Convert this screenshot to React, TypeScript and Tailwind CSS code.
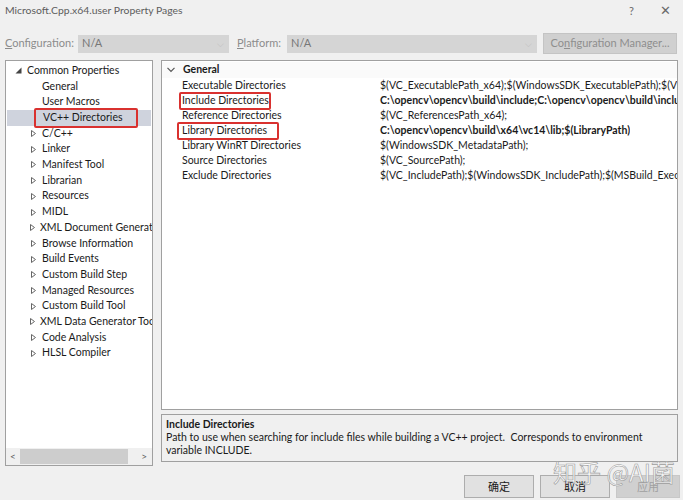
import React from "react"

const treeItems: { label: string; expand?: boolean; selected?: boolean }[] = [
  { label: "General" },
  { label: "User Macros" },
  { label: "VC++ Directories", selected: true },
  { label: "C/C++", expand: true },
  { label: "Linker", expand: true },
  { label: "Manifest Tool", expand: true },
  { label: "Librarian", expand: true },
  { label: "Resources", expand: true },
  { label: "MIDL", expand: true },
  { label: "XML Document Generator Tool", expand: true },
  { label: "Browse Information", expand: true },
  { label: "Build Events", expand: true },
  { label: "Custom Build Step", expand: true },
  { label: "Managed Resources", expand: true },
  { label: "Custom Build Tool", expand: true },
  { label: "XML Data Generator Tool", expand: true },
  { label: "Code Analysis", expand: true },
  { label: "HLSL Compiler", expand: true },
]

const props: { name: string; value: string; bold?: boolean; box?: string }[] = [
  { name: "Executable Directories", value: "$(VC_ExecutablePath_x64);$(WindowsSDK_ExecutablePath);$(VS_ExecutablePath);$(MSBuild_ExecutablePath)" },
  { name: "Include Directories", value: "C:\\opencv\\opencv\\build\\include;C:\\opencv\\opencv\\build\\include\\opencv2;$(IncludePath)", bold: true, box: "left-[17px] w-[92px]" },
  { name: "Reference Directories", value: "$(VC_ReferencesPath_x64);" },
  { name: "Library Directories", value: "C:\\opencv\\opencv\\build\\x64\\vc14\\lib;$(LibraryPath)", bold: true, box: "left-[15px] w-[102px]" },
  { name: "Library WinRT Directories", value: "$(WindowsSDK_MetadataPath);" },
  { name: "Source Directories", value: "$(VC_SourcePath);" },
  { name: "Exclude Directories", value: "$(VC_IncludePath);$(WindowsSDK_IncludePath);$(MSBuild_ExecutablePath);$(VC_LibraryPath_x64)" },
]

// small right-pointing outline triangle used by the tree
const Expander = () => (
  <svg width="5" height="7" viewBox="0 0 5 7" className="shrink-0">
    <path d="M0.5 0.5 L4.5 3.5 L0.5 6.5 Z" fill="none" stroke="#666" strokeWidth="1" />
  </svg>
)

const cjk = { fontFamily: '"Noto Sans CJK SC", sans-serif' }

export default function App() {
  return (
    <div className="w-[683px] h-[500px] bg-[#f0f0f0] text-[10.5px] text-[#1a1a1a] overflow-hidden relative" style={{ fontFamily: 'Lato, "Noto Sans", sans-serif' }}>
      {/* title bar */}
      <div className="h-[22px] flex items-center justify-between pl-[5px] pr-[12px] text-[#5c5c5c] text-[10.4px]">
        <span>Microsoft.Cpp.x64.user Property Pages</span>
        <div className="flex items-center gap-[26px] text-[#6a6a6a]">
          <span className="text-[11px]">?</span>
          <span className="text-[13px]">✕</span>
        </div>
      </div>

      {/* configuration row */}
      <div className="flex items-center h-[21px] mt-[11px] pl-[5px] pr-[6px] text-[#8c8c8c] text-[11px]">
        <span className="w-[73px]"><u>C</u>onfiguration:</span>
        <div className="w-[151px] h-[18px] bg-[#d5d5d5] flex items-center justify-between pl-[4px] pr-[5px] text-[#777]">
          <span>N/A</span>
          <span className="text-[9px] text-[#bdbdbd]">⌵</span>
        </div>
        <span className="ml-[8px] w-[50px]"><u>P</u>latform:</span>
        <div className="w-[250px] h-[18px] bg-[#d5d5d5] flex items-center justify-between pl-[4px] pr-[5px] text-[#777]">
          <span>N/A</span>
          <span className="text-[9px] text-[#bdbdbd]">⌵</span>
        </div>
        <div className="ml-[6px] w-[134px] h-[21px] bg-[#d0d0d0] border border-[#c4c4c4] flex items-center justify-center text-[#8e8e8e]">
          Co<u>n</u>figuration Manager...
        </div>
      </div>

      {/* main */}
      <div className="flex mt-[6px] pl-[5px] gap-[8px]">
        {/* tree */}
        <div className="w-[148px] h-[406px] shrink-0 bg-white border border-[#a0a0a0] flex flex-col">
          <div className="flex-1 pt-[2px] overflow-hidden">
            <div className="flex items-center h-[15.7px] pl-[9px] gap-[5px]">
              <svg width="7" height="7" viewBox="0 0 7 7" className="shrink-0">
                <path d="M6.5 0.5 L6.5 6.5 L0.5 6.5 Z" fill="#444" />
              </svg>
              <span className="whitespace-nowrap">Common Properties</span>
            </div>
            {treeItems.map(item => (
              <div key={item.label} className={`relative flex items-center h-[15.7px] pl-[24px] gap-[5px] whitespace-nowrap ${item.selected ? "bg-[#cfd3dd] mx-[1px] pl-[23px]" : ""}`}>
                <span className="w-[7px] flex justify-center">{item.expand ? <Expander /> : null}</span>
                <span>{item.label}</span>
                {item.selected && (
                  <span className="absolute left-[27px] w-[104px] -top-[2px] -bottom-[2px] border-2 border-[#d9312f] rounded-[2px]" />
                )}
              </div>
            ))}
          </div>
          <div className="h-[17px] flex items-center bg-[#f0f0f0] text-[#606060]">
            <span className="w-[14px] text-center text-[10px]">&lt;</span>
            <div className="w-[108px] h-[15px] bg-[#cdcdcd]" />
            <span className="flex-1 text-right pr-[5px] text-[10px]">&gt;</span>
          </div>
        </div>

        {/* right column */}
        <div className="w-[517px] shrink-0 flex flex-col gap-[4px]">
          <div className="h-[350px] bg-white border border-[#a0a0a0] overflow-hidden">
            <div className="flex items-center h-[16px] mt-[1px] pl-[5px] gap-[8px] bg-[#fafafa]">
              <svg width="8" height="6" viewBox="0 0 8 6">
                <path d="M0.5 0.8 L4 4.5 L7.5 0.8" fill="none" stroke="#555" strokeWidth="1.2" />
              </svg>
              <span className="font-bold">General</span>
            </div>
            {props.map(p => (
              <div key={p.name} className="relative flex h-[15px] items-center whitespace-nowrap">
                <div className="w-[215px] pl-[20px] shrink-0">{p.name}</div>
                <div className={`min-w-0 pl-[3px] overflow-hidden ${p.bold ? "font-bold" : ""}`}>{p.value}</div>
                {p.box && (
                  <span className={`absolute -top-[1px] -bottom-[2px] border-2 border-[#d9312f] rounded-[2px] ${p.box}`} />
                )}
              </div>
            ))}
          </div>
          <div className="h-[48px] border border-[#a0a0a0] bg-[#f0f0f0] px-[4px] pt-[3px] leading-[13px]">
            <div className="font-bold">Include Directories</div>
            <div>Path to use when searching for include files while building a VC++ project.&nbsp; Corresponds to environment variable INCLUDE.</div>
          </div>
        </div>
      </div>

      {/* buttons */}
      <div className="flex justify-end gap-[6px] mt-[9px] pr-[3px] text-[11px]">
        <div className="w-[70px] h-[23px] bg-[#e1e1e1] border border-[#adadad] flex items-center justify-center" style={cjk}>确定</div>
        <div className="w-[70px] h-[23px] bg-[#e1e1e1] border border-[#adadad] flex items-center justify-center" style={cjk}>取消</div>
        <div className="w-[64px] h-[23px] bg-[#d0d0d0] border border-[#c8c8c8] flex items-center justify-center text-[#a0a0a0]" style={cjk}>应用</div>
      </div>

      {/* watermark */}
      <div className="absolute left-[553px] top-[460px] text-[24px] text-white/80 leading-none pointer-events-none" style={{ ...cjk, WebkitTextStroke: "0.6px #9a9a9a" }}>
        知乎 @AI菌
      </div>
    </div>
  )
}
